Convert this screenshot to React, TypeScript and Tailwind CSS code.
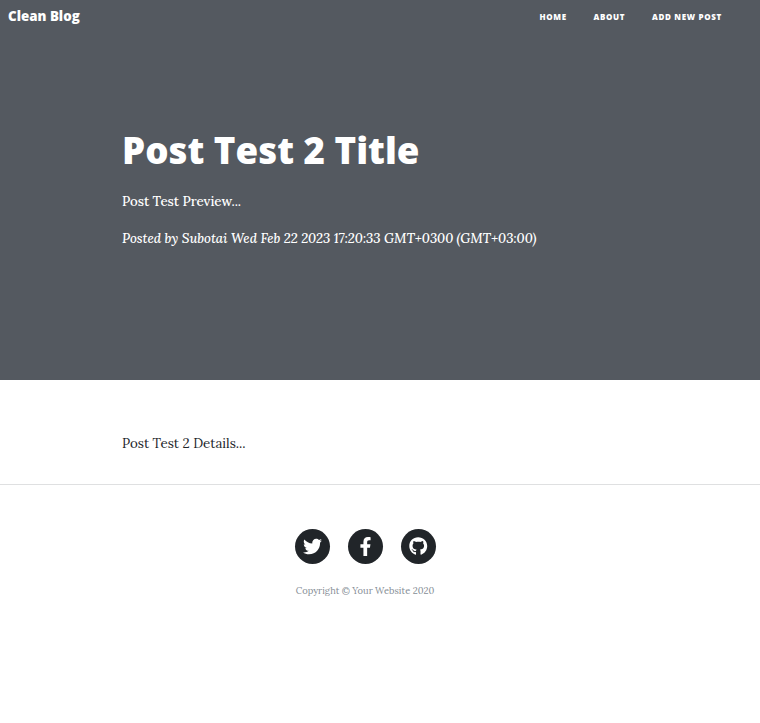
import { FaTwitter, FaFacebookF, FaGithub } from "react-icons/fa";

const links = [
  { label: "Home", cls: "w-[27.5px]" },
  { label: "About", cls: "w-[32px]" },
  { label: "Add New Post", cls: "w-[70px]" },
];
const icons = [
  { Icon: FaTwitter, cls: "size-[19px]" },
  { Icon: FaFacebookF, cls: "size-[19px]" },
  { Icon: FaGithub, cls: "size-[18.5px]" },
];

export default function App() {
  return (
    <div className="min-h-[723px] bg-white font-['Lora','Liberation_Serif',serif] text-[#212529]">
      <header className="h-[380px] bg-[#545960] text-white">
        <nav className="flex h-[33px] items-center justify-between pr-[38px] pl-2 font-['Open_Sans',sans-serif] font-extrabold whitespace-nowrap">
          <a className="text-[13.33px]">Clean Blog</a>
          <ul className="flex gap-[26.5px] text-[8px] tracking-[0.667px] uppercase">
            {links.map((l) => (
              <li key={l.label} className={l.cls}>{l.label}</li>
            ))}
          </ul>
        </nav>
        <div className="pt-[97px] pl-[122px] whitespace-nowrap">
          <h1 className="font-['Open_Sans',sans-serif] text-[36.67px] leading-[40px] font-extrabold">Post Test 2 Title</h1>
          <p className="mt-[22px] text-[13.33px] leading-[20px] font-medium tracking-[-0.05px]">Post Test Preview...</p>
          <p className="mt-[17px] text-[13.33px] leading-[20px] font-medium tracking-[-0.05px] italic">Posted by Subotai Wed Feb 22 2023 17:20:33 GMT+0300 (GMT+03:00)</p>
        </div>
      </header>
      <main className="h-[104px] pt-[54px] pl-[122px] text-[13.33px] leading-[20px]">Post Test 2 Details...</main>
      <footer className="border-t border-[#dfe0e1] pt-[44px] pr-[30px]">
        <div className="flex justify-center gap-[18px] pl-[1px]">
          {icons.map(({ Icon, cls }, i) => (
            <a key={i} className="flex size-[35px] items-center justify-center rounded-full bg-[#212529] text-white">
              <Icon className={cls} />
            </a>
          ))}
        </div>
        <p className="mt-[19px] text-center text-[9.33px] leading-[16px] text-[#868e96]">Copyright © Your Website 2020</p>
      </footer>
    </div>
  );
}
